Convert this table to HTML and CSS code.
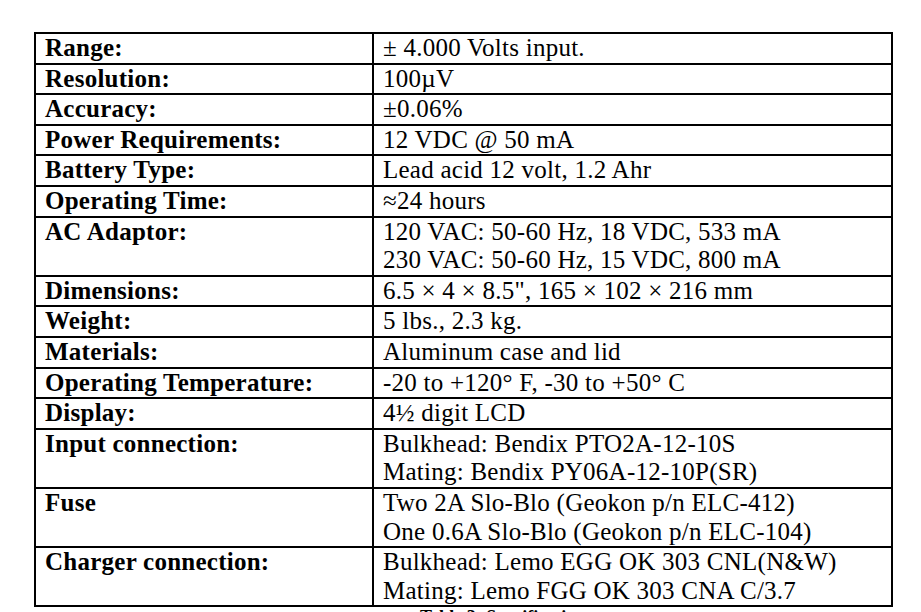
FILE: index.html
```html
<!DOCTYPE html>
<html lang="en">
<head>
<meta charset="utf-8">
<title>Specifications</title>
<link rel="stylesheet" href="styles.css">
</head>
<body>
<div class="page">
  <h2 class="heading">Specifications</h2>
  <table class="spec">
    <colgroup>
      <col class="col-label">
      <col class="col-value">
    </colgroup>
    <tbody>
      <tr><th>Range:</th><td>± 4.000 Volts input.</td></tr>
      <tr><th>Resolution:</th><td>100µV</td></tr>
      <tr><th>Accuracy:</th><td>±0.06%</td></tr>
      <tr><th>Power Requirements:</th><td>12 VDC @ 50 mA</td></tr>
      <tr><th>Battery Type:</th><td>Lead acid 12 volt, 1.2 Ahr</td></tr>
      <tr><th>Operating Time:</th><td>≈24 hours</td></tr>
      <tr><th>AC Adaptor:</th><td>120 VAC: 50-60 Hz, 18 VDC, 533 mA<br>230 VAC: 50-60 Hz, 15 VDC, 800 mA</td></tr>
      <tr><th>Dimensions:</th><td>6.5 × 4 × 8.5", 165 × 102 × 216 mm</td></tr>
      <tr><th>Weight:</th><td>5 lbs., 2.3 kg.</td></tr>
      <tr><th>Materials:</th><td>Aluminum case and lid</td></tr>
      <tr><th>Operating Temperature:</th><td>-20 to +120° F, -30 to +50° C</td></tr>
      <tr><th>Display:</th><td>4½ digit LCD</td></tr>
      <tr><th>Input connection:</th><td>Bulkhead: Bendix PTO2A-12-10S<br>Mating: Bendix PY06A-12-10P(SR)</td></tr>
      <tr><th>Fuse</th><td>Two 2A Slo-Blo (Geokon p/n ELC-412)<br>One 0.6A Slo-Blo (Geokon p/n ELC-104)</td></tr>
      <tr><th>Charger connection:</th><td>Bulkhead: Lemo EGG OK 303 CNL(N&amp;W)<br>Mating: Lemo FGG OK 303 CNA C/3.7</td></tr>
    </tbody>
  </table>
  <p class="caption">Table 3: Specifications</p>
</div>
</body>
</html>
```

FILE: styles.css
```css
html, body {
  margin: 0;
  padding: 0;
  background: #ffffff;
}

body {
  font-family: "Liberation Serif", "Times New Roman", serif;
  color: #000000;
  overflow: hidden;
}

.page {
  padding-left: 34px;
}

.heading {
  margin: -27px 0 0 0;
  padding-left: 176px;
  font-size: 25px;
  line-height: 28px;
  font-weight: bold;
  height: 28px;
}

.spec {
  margin-top: 31px;
  border-collapse: collapse;
  table-layout: fixed;
  width: 859px;
  font-size: 25px;
  line-height: 28.6px;
  letter-spacing: 0.25px;
}

.col-label {
  width: 338px;
}

.spec th,
.spec td {
  border: 2px solid #000000;
  padding: 0 9px;
  vertical-align: top;
  text-align: left;
  white-space: nowrap;
}

.spec th {
  font-weight: bold;
}

.spec td {
  font-weight: normal;
}

.caption {
  margin: 3px 0 0 0;
  padding-left: 386px;
  font-size: 18px;
  line-height: 14px;
  font-weight: bold;
}
```
